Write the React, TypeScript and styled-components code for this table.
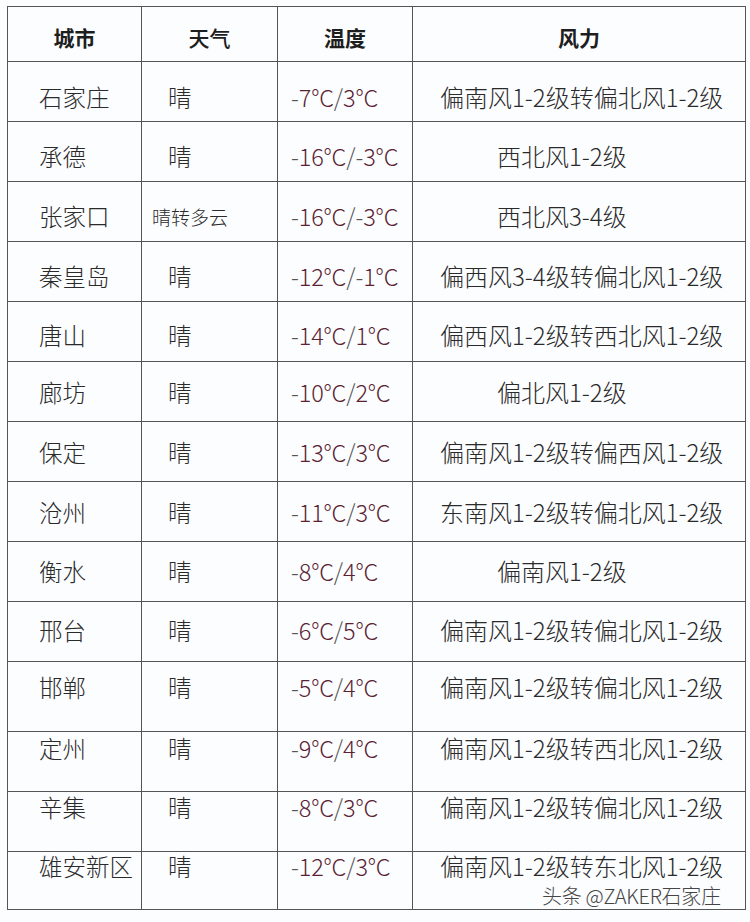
import React from "react";
import styled, { createGlobalStyle } from "styled-components";

const GlobalStyle = createGlobalStyle`
  html, body {
    margin: 0;
    padding: 0;
    background: #fcfdff;
  }
  * { box-sizing: border-box; }
`;

const FONT = `"Noto Sans CJK SC", "Noto Sans", sans-serif`;

const Page = styled.div`
  position: relative;
  width: 750px;
  height: 922px;
  padding: 6px 0 0 7px;
  background: #fcfdff;
  font-family: ${FONT};
  overflow: hidden;
`;

const Table = styled.table`
  border-collapse: collapse;
  table-layout: fixed;
  width: 738px;
  border: 1px solid #3e3e3e;
`;

const Row = styled.tr<{ $h: number }>`
  height: ${(p) => p.$h}px;
`;

const HeadCell = styled.th<{ $w: number }>`
  border: 1px solid #555;
  padding: 5px 0 0 0;
  vertical-align: middle;
  text-align: center;
  font-size: 21px;
  line-height: 28px;
  font-weight: ${(p) => p.$w};
  color: #1e1e1e;
`;

const Cell = styled.td<{ $top: number; $left: number; $size?: number }>`
  border: 1px solid #555;
  padding: ${(p) => p.$top}px 0 0 ${(p) => p.$left}px;
  vertical-align: top;
  text-align: left;
  white-space: nowrap;
  font-size: ${(p) => p.$size ?? 23.5}px;
  font-weight: 300;
  line-height: 28px;
  color: #2a2a2a;
`;

const Temp = styled.span`
  color: #5a2232;
  letter-spacing: -0.2px;
`;

const Dash = styled.span`
  color: #555;
`;

const Watermark = styled.div`
  position: absolute;
  left: 542px;
  top: 888px;
  font-size: 20px;
  line-height: 16px;
  font-weight: 300;
  color: #454545;
  letter-spacing: -0.3px;
  text-shadow: 0 0 2px #fff, 0 0 2px #fff, 0 0 1px #fff;
`;

type Item = {
  city: string;
  weather: string;
  temp: string;
  wind: string;
  h: number;
  t: number;
};

const rows: Item[] = [
  { city: "石家庄", weather: "晴", temp: "-7°C/3°C", wind: "偏南风1-2级转偏北风1-2级", h: 60, t: 37 },
  { city: "承德", weather: "晴", temp: "-16°C/-3°C", wind: "西北风1-2级", h: 60, t: 36 },
  { city: "张家口", weather: "晴转多云", temp: "-16°C/-3°C", wind: "西北风3-4级", h: 60, t: 36 },
  { city: "秦皇岛", weather: "晴", temp: "-12°C/-1°C", wind: "偏西风3-4级转偏北风1-2级", h: 60, t: 36 },
  { city: "唐山", weather: "晴", temp: "-14°C/1°C", wind: "偏西风1-2级转西北风1-2级", h: 60, t: 35 },
  { city: "廊坊", weather: "晴", temp: "-10°C/2°C", wind: "偏北风1-2级", h: 60, t: 32 },
  { city: "保定", weather: "晴", temp: "-13°C/3°C", wind: "偏南风1-2级转偏西风1-2级", h: 60, t: 32 },
  { city: "沧州", weather: "晴", temp: "-11°C/3°C", wind: "东南风1-2级转偏北风1-2级", h: 60, t: 32 },
  { city: "衡水", weather: "晴", temp: "-8°C/4°C", wind: "偏南风1-2级", h: 60, t: 31 },
  { city: "邢台", weather: "晴", temp: "-6°C/5°C", wind: "偏南风1-2级转偏北风1-2级", h: 60, t: 30 },
  { city: "邯郸", weather: "晴", temp: "-5°C/4°C", wind: "偏南风1-2级转偏北风1-2级", h: 70, t: 27 },
  { city: "定州", weather: "晴", temp: "-9°C/4°C", wind: "偏南风1-2级转西北风1-2级", h: 60, t: 18 },
  { city: "辛集", weather: "晴", temp: "-8°C/3°C", wind: "偏南风1-2级转偏北风1-2级", h: 60, t: 17 },
  { city: "雄安新区", weather: "晴", temp: "-12°C/3°C", wind: "偏南风1-2级转东北风1-2级", h: 58, t: 16 },
];

function renderTemp(s: string) {
  const parts = s.split("/");
  return (
    <>
      {parts.map((p, i) => (
        <React.Fragment key={i}>
          {i > 0 && <Dash>/</Dash>}
          {p.startsWith("-") ? (
            <>
              <Dash>-</Dash>
              <Temp>{p.slice(1)}</Temp>
            </>
          ) : (
            <Temp>{p}</Temp>
          )}
        </React.Fragment>
      ))}
    </>
  );
}

export default function App() {
  return (
    <>
      <GlobalStyle />
      <Page>
        <Table>
          <colgroup>
            <col style={{ width: 134 }} />
            <col style={{ width: 136 }} />
            <col style={{ width: 135 }} />
            <col style={{ width: 333 }} />
          </colgroup>
          <thead>
            <Row $h={55}>
              <HeadCell $w={700}>城市</HeadCell>
              <HeadCell $w={500}>天气</HeadCell>
              <HeadCell $w={700}>温度</HeadCell>
              <HeadCell $w={600}>风力</HeadCell>
            </Row>
          </thead>
          <tbody>
            {rows.map((r) => {
              const pad = Math.max(0, r.t - 16);
              const short = r.wind.length <= 7;
              const longWeather = r.weather.length > 1;
              return (
                <Row key={r.city} $h={r.h}>
                  <Cell $top={pad} $left={31}>{r.city}</Cell>
                  <Cell
                    $top={longWeather ? pad + 1 : pad}
                    $left={longWeather ? 10 : 26}
                    $size={longWeather ? 19 : undefined}
                  >
                    {r.weather}
                  </Cell>
                  <Cell $top={pad} $left={13}>{renderTemp(r.temp)}</Cell>
                  <Cell $top={pad} $left={short ? 84 : 27} $size={24}>
                    {r.wind}
                  </Cell>
                </Row>
              );
            })}
          </tbody>
        </Table>
        <Watermark>头条 @ZAKER石家庄</Watermark>
      </Page>
    </>
  );
}
